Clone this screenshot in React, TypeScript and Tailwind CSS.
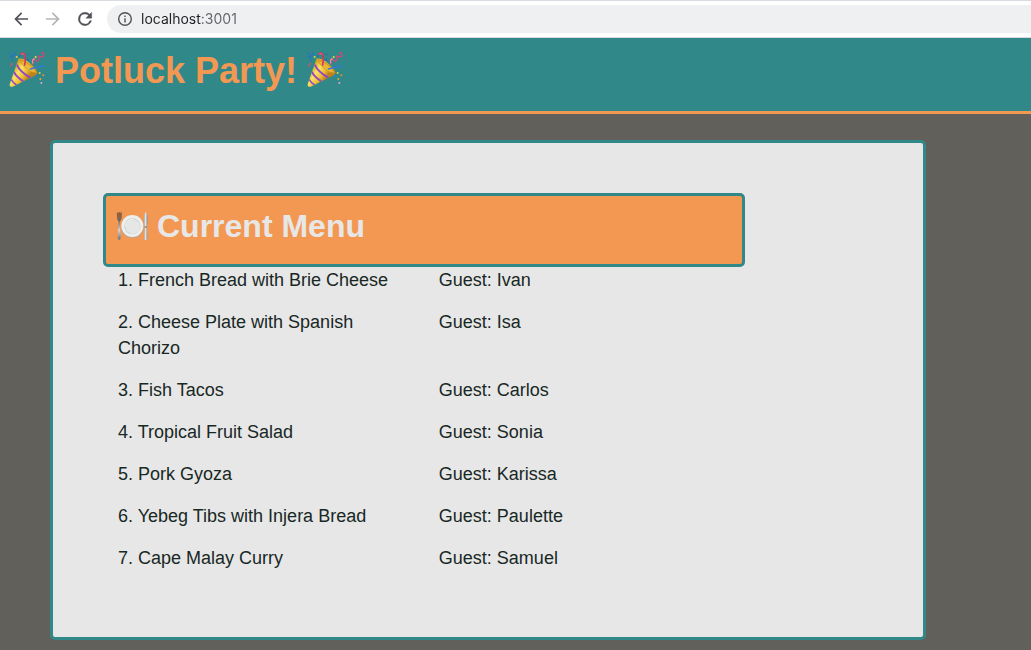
const menu = [
  { dish: "French Bread with Brie Cheese", guest: "Ivan" },
  { dish: "Cheese Plate with Spanish Chorizo", guest: "Isa" },
  { dish: "Fish Tacos", guest: "Carlos" },
  { dish: "Tropical Fruit Salad", guest: "Sonia" },
  { dish: "Pork Gyoza", guest: "Karissa" },
  { dish: "Yebeg Tibs with Injera Bread", guest: "Paulette" },
  { dish: "Cape Malay Curry", guest: "Samuel" },
];

function PartyPopper() {
  return (
    <svg viewBox="27 38 108 108" className="size-9 shrink-0 overflow-visible" fill="none" aria-hidden="true">
      <defs>
        <linearGradient id="cone" x1="38" y1="88" x2="80" y2="118" gradientUnits="userSpaceOnUse">
          <stop offset="0" stopColor="#d9a520" />
          <stop offset="0.35" stopColor="#fbe166" />
          <stop offset="0.7" stopColor="#f0bf33" />
          <stop offset="1" stopColor="#bd8317" />
        </linearGradient>
        <clipPath id="coneShape">
          <path d="M56 54Q72 54 91 70Q113 88 113 98Q111 103 104 106L38 139Q31 141 28 135Z" />
        </clipPath>
      </defs>
      <g clipPath="url(#coneShape)">
        <rect x="24" y="50" width="92" height="92" fill="url(#cone)" />
        <path d="M50 73Q61 96 91 112" stroke="#9346c8" strokeWidth="6" />
        <path d="M41 94Q49 110 70 123" stroke="#9346c8" strokeWidth="6" />
        <path d="M33 116Q38 127 50 134" stroke="#9346c8" strokeWidth="5" />
      </g>
      <path d="M57 56Q73 56 91 72Q109 87 111 98Q96 99 78 85Q59 68 57 56Z" fill="#d59925" />
      <path d="M63 61Q78 65 91 77Q103 87 106 95Q91 95 78 82Q65 70 63 61Z" fill="#e9b838" />
      <g strokeLinecap="round">
        <path d="M63 41Q72 34 75 46Q78 58 74 74" stroke="#d9345d" strokeWidth="5" />
        <path d="M65 40Q70 38 72 43" stroke="#f36b7c" strokeWidth="3" />
        <path d="M91 86Q106 82 116 80Q125 76 133 77" stroke="#3578dd" strokeWidth="4" />
        <path d="M29 38Q36 51 45 44Q50 37 42 36M30 49Q38 45 39 53Q32 59 39 62" stroke="#286ed1" strokeWidth="3" />
        <path d="M99 71Q95 55 105 57Q113 69 117 57Q113 43 121 48Q132 53 132 41Q129 34 125 39" stroke="#d44778" strokeWidth="4" />
        <path d="M98 68Q96 56 103 56" stroke="#f589a5" strokeWidth="4" />
      </g>
      <circle cx="50" cy="50" r="3" fill="#e3d535" />
      <circle cx="60" cy="47" r="3" fill="#2e68c9" />
      <circle cx="85" cy="42" r="3" fill="#3369bb" />
      <circle cx="84" cy="58" r="3" fill="#365dc4" />
      <circle cx="107" cy="50" r="3" fill="#e9e13b" />
      <circle cx="36" cy="71" r="3" fill="#e95070" />
      <circle cx="32" cy="77" r="3" fill="#c65370" />
      <circle cx="119" cy="98" r="3" fill="#e3d13b" />
      <circle cx="111" cy="106" r="3" fill="#3476da" />
      <circle cx="130" cy="105" r="3" fill="#f28b42" />
      <circle cx="121" cy="116" r="3" fill="#e9a92c" />
      <circle cx="124" cy="128" r="3" fill="#f0a0c3" />
    </svg>
  );
}

function PlateWithCutlery() {
  return (
    <svg viewBox="48 60 96 90" className="h-[30px] w-8 shrink-0" fill="none" aria-hidden="true">
      <defs>
        <linearGradient id="fork" x1="0" y1="62" x2="0" y2="147" gradientUnits="userSpaceOnUse">
          <stop offset="0" stopColor="#8b5d3e" />
          <stop offset="0.35" stopColor="#6f6864" />
          <stop offset="0.65" stopColor="#d4d7da" />
          <stop offset="1" stopColor="#686e73" />
        </linearGradient>
        <linearGradient id="knife" x1="130" y1="0" x2="143" y2="0" gradientUnits="userSpaceOnUse">
          <stop offset="0" stopColor="#70757a" />
          <stop offset="0.45" stopColor="#e9edf0" />
          <stop offset="1" stopColor="#858a8f" />
        </linearGradient>
      </defs>
      <path d="M49 64L51 81Q52 89 56 92L53 139Q53 147 58 147Q63 147 62 139L59 92Q64 88 65 80L65 64L62 64L62 79H60V64H57V79H55V64H53V79H51Z" fill="url(#fork)" />
      <path d="M50 66L52 80H64L64 66" fill="#98633e" />
      <path d="M54 64V79M58 64V79M62 64V79" stroke="#6f5546" strokeWidth="1" />
      <path d="M137 63Q143 68 143 82Q143 96 141 107L142 143Q142 147 137 147Q132 147 132 143L134 108Q130 94 132 81Q132 70 137 63Z" fill="url(#knife)" />
      <path d="M134 108H141" stroke="#5d646c" strokeWidth="3" />
      <circle cx="97" cy="107" r="34" fill="#b8a797" />
      <circle cx="97" cy="105" r="33" fill="#edeeee" />
      <circle cx="97" cy="106" r="24" fill="#c8cacb" />
      <circle cx="98" cy="107" r="22" fill="#e5e6e6" />
      <path d="M76 106A21 21 0 0 1 101 85" stroke="#fafafa" strokeWidth="2" />
    </svg>
  );
}

function BrowserBar() {
  return (
    <div className="flex h-[38px] items-center border-y border-[#d8dadf] bg-white pl-[11px]">
      <div className="flex items-center gap-3">
        <button type="button" aria-label="Back" className="text-[#505357]">
          <svg viewBox="0 0 24 24" className="size-5" fill="currentColor" aria-hidden="true">
            <path d="M20.5 11H7.83l5.59-5.59L12 4l-8 8 8 8 1.41-1.41L7.83 13H20.5z" />
          </svg>
        </button>
        <button type="button" aria-label="Forward" className="text-[#b5b6b8]">
          <svg viewBox="0 0 24 24" className="size-5" fill="currentColor" aria-hidden="true">
            <path d="M3.5 11h12.67l-5.59-5.59L12 4l8 8-8 8-1.41-1.41L16.17 13H3.5z" />
          </svg>
        </button>
        <button type="button" aria-label="Reload" className="text-[#505357]">
          <svg viewBox="0 0 24 24" className="size-5" fill="currentColor" stroke="currentColor" strokeWidth="0.5" aria-hidden="true">
            <path d="M17.65 6.35A7.95 7.95 0 0 0 12 4a8 8 0 1 0 7.73 10h-2.08A6 6 0 1 1 12 6c1.66 0 3.14.69 4.22 1.78L13 11h7V4z" />
          </svg>
        </button>
      </div>
      <div className="ml-3 flex h-7 min-w-0 flex-1 items-center gap-2 rounded-l-full bg-[#eff0f2] pl-[10px]">
        <svg viewBox="0 0 16 16" className="size-4 shrink-0" fill="none" stroke="#505357" strokeWidth="1.4" aria-hidden="true">
          <circle cx="8" cy="8" r="6.3" />
          <path d="M8 7.2v4.2M8 4.4v1.5" />
        </svg>
        <input
          type="text"
          aria-label="Address"
          defaultValue="localhost:3001"
          className="min-w-0 flex-1 bg-[linear-gradient(90deg,#202124_61px,#5f6368_61px)] bg-clip-text font-[Inter,sans-serif] text-[14px] leading-5 text-transparent caret-black outline-none"
        />
      </div>
    </div>
  );
}

export default function App() {
  return (
    <div className="min-h-screen bg-[#62605b] font-['Liberation_Sans',Arial,sans-serif] text-[#182825]">
      <BrowserBar />
      <header className="border-b-[3px] border-[#f39853] bg-[#318888] px-[9px] pt-[13px] pb-5 text-[#f39853]">
        <h1 className="flex items-center gap-[10px] text-[36px] leading-10 font-bold">
          <PartyPopper />
          Potluck Party!
          <PartyPopper />
        </h1>
      </header>
      <div className="pt-[26px] pb-[10px] pl-[50px]">
        <main className="mr-[105px] rounded-[5px] border-[3px] border-[#318888] bg-[#e7e7e7] p-[50px]">
          <section className="w-5/6">
            <h2 className="flex items-center gap-[9px] rounded-[5px] border-[3px] border-[#318888] bg-[#f39853] px-[10px] pt-[10px] pb-[18px] text-[32px] leading-10 font-bold text-[#e7e7e7]">
              <PlateWithCutlery />
              Current Menu
            </h2>
            <table className="w-full table-fixed text-left text-[18px] leading-[26px]">
              <tbody>
                {menu.map((item, i) => (
                  <tr key={item.dish} className="align-top">
                    <td className="px-[15px] pb-4">{`${i + 1}. ${item.dish}`}</td>
                    <td className="px-[15px] pb-4">{`Guest: ${item.guest}`}</td>
                  </tr>
                ))}
              </tbody>
            </table>
          </section>
        </main>
      </div>
    </div>
  );
}
